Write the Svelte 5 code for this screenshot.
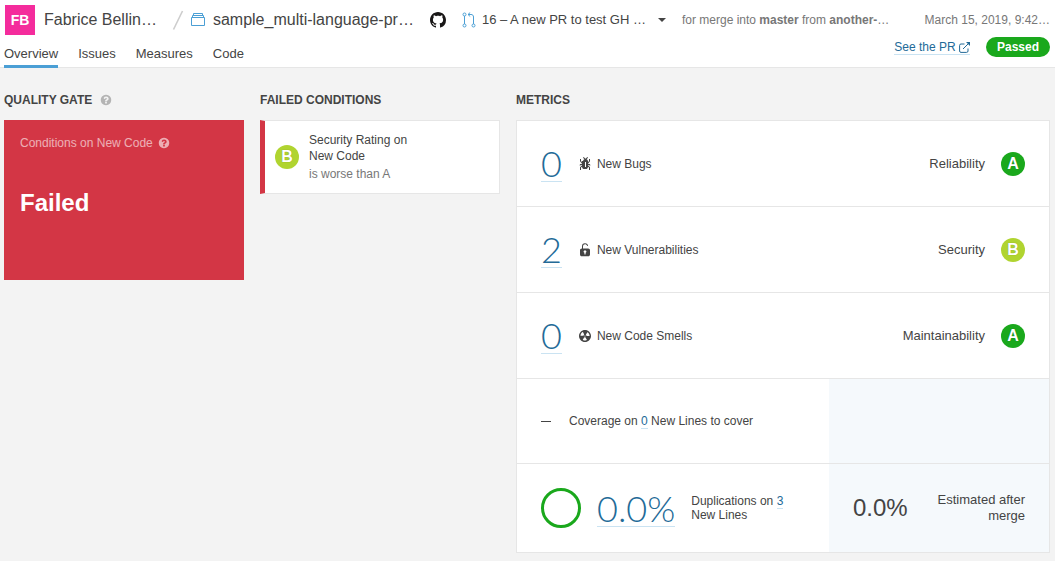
<script lang="ts">
  const tabs = ['Overview', 'Issues', 'Measures', 'Code'];

  const ratings = [
    { icon: 'bug', value: 0, label: 'New Bugs', domain: 'Reliability', rating: 'A' },
    { icon: 'lock', value: 2, label: 'New Vulnerabilities', domain: 'Security', rating: 'B' },
    { icon: 'smell', value: 0, label: 'New Code Smells', domain: 'Maintainability', rating: 'A' },
  ];

  const iconPaths: Record<string, string> = {
    bug: 'M8.01 10.99h1v-5h-1v5zm3-2h1.265l.46.771.775-.543-.733-1.228H11.01v-.316l2-2.343v-2.341h-1v1.972l-1 1.172V4.99h-.029c-.101-.826-.658-1.52-1.436-1.853l1.472-1.349-.676-.736-1.831 1.678-1.831-1.678-.676.736 1.472 1.349c-.778.333-1.335 1.027-1.436 1.853H5.01v1.144l-1-1.172V2.99h-1v2.341l2 2.343v.316H3.243l-.733 1.228.775.543.46-.771H5.01v.287l-2 1.912v2.801h1v-2.374l1.003-.959c.018 1.289 1.07 2.333 2.363 2.333h1.268c1.293 0 2.345-1.044 2.363-2.333l1.003.959v2.374h1v-2.801l-2-1.912v-.287z',
    lock: 'M11.2 6.500H6V4.200a2 2 0 0 1 2-2c1 0 1.700.6 2 1.400a.5.5 0 0 0 1-.3C10.600 2 9.500 1.200 8 1.200a3 3 0 0 0-3 3v2.300h-.2C3.800 6.500 3 7.300 3 8.300v4.200c0 1 .8 1.800 1.800 1.800h6.400c1 0 1.800-.8 1.800-1.800V8.300c0-1-.8-1.800-1.800-1.800zM8.600 10.800V12a.6.6 0 0 1-1.200 0v-1.200a1.300 1.300 0 1 1 1.200 0z',
    smell: 'M8 2C4.7 2 2 4.7 2 8s2.7 6 6 6 6-2.7 6-6-2.7-6-6-6zm-.5 5.500h.9v.9h-.9v-.9zm-3.800.2c-.1 0-.2-.1-.2-.2 0-.4.1-1.200.6-2S5.300 4.200 5.600 4c.2 0 .3 0 .3.1l1.300 2.300c0 .1 0 .2-.1.2-.1.2-.2.3-.3.5-.1.2-.2.4-.2.5 0 .1-.1.2-.2.2l-2.700-.1zM9.900 12c-.3.2-1.100.5-2 .5-.9 0-1.700-.3-2-.5-.1 0-.1-.2-.1-.3l1.300-2.300c0-.1.1-.1.2-.1.2.1.3.1.5.1s.4 0 .5-.1c.1 0 .2 0 .2.1l1.300 2.300c.2.2.2.3.1.3zm2.500-4.100L9.700 8c-.1 0-.2-.1-.2-.2 0-.2-.1-.4-.2-.5 0-.1-.2-.3-.3-.4-.1 0-.1-.1-.1-.2l1.300-2.300c.1-.1.2-.1.3-.1.3.2 1 .7 1.500 1.500s.6 1.600.6 2c0 0-.1.1-.2.1z',
  };
</script>

{#snippet help()}
  <svg class="help" width="12" height="12" viewBox="0 0 16 16" aria-hidden="true">
    <path
      fill="currentColor"
      fill-rule="evenodd"
      d="M9.167 12.375v-1.75q0-.127-.082-.21t-.21-.082h-1.75q-.127 0-.21.082t-.082.21v1.75q0 .128.082.21t.21.082h1.75q.128 0 .21-.082t.082-.21zM11.5 6.25q0-.802-.506-1.486T9.732 3.707t-1.55-.374q-2.215 0-3.382 1.942-.137.22.072.383l1.204.912q.065.054.175.054.147 0 .228-.11.482-.618.784-.838.31-.22.786-.22.437 0 .779.238t.342.538q0 .347-.182.556t-.62.407q-.574.255-1.053.788T6.833 9.127v.328q0 .128.082.21t.21.083h1.75q.127 0 .21-.082t.082-.21q0-.173.196-.451t.497-.451q.292-.164.447-.26t.42-.319.406-.437.256-.553T11.5 6.25zM15 8q0 1.905-.939 3.514t-2.548 2.547T8 15t-3.514-.939-2.547-2.548T1 8t.939-3.514 2.547-2.547T8 1t3.514.939 2.547 2.547T15 8z"
    />
  </svg>
{/snippet}

<header>
  <div class="crumbs">
    <span class="avatar">FB</span>
    <a class="name" href="#organization">Fabrice Bellin…</a>
    <svg class="slash" width="12" height="22" viewBox="0 0 12 22" aria-hidden="true">
      <path d="M1.500 20.500L10.500 2" stroke="#cdcdcd" stroke-width="1.6" />
    </svg>
    <svg class="project" width="14" height="14" viewBox="0 0 14 14" aria-hidden="true">
      <path
        d="M.5 4.500h13v8H.5zM1.500 4.500v-2h11v2M2.500 2.500v-2h9v2"
        fill="none"
        stroke="#4b9fd5"
      />
    </svg>
    <a class="name" href="#project">sample_multi-language-pr…</a>
    <a class="github" href="#github" aria-label="GitHub">
      <svg width="16" height="16" viewBox="0 0 16 16">
        <path
          fill="#191717"
          d="M8 0C3.58 0 0 3.58 0 8c0 3.54 2.29 6.53 5.47 7.59.4.07.55-.17.55-.38 0-.19-.01-.82-.01-1.49-2.01.37-2.53-.49-2.69-.94-.09-.23-.48-.94-.82-1.13-.28-.15-.68-.52-.01-.53.63-.01 1.08.58 1.23.82.72 1.21 1.87.87 2.33.66.07-.52.28-.87.51-1.07-1.78-.2-3.64-.89-3.64-3.95 0-.87.31-1.59.82-2.15-.08-.2-.36-1.02.08-2.12 0 0 .67-.21 2.2.82.64-.18 1.32-.27 2-.27s1.36.09 2 .27c1.53-1.04 2.2-.82 2.2-.82.44 1.1.16 1.92.08 2.12.51.56.82 1.27.82 2.15 0 3.07-1.87 3.75-3.65 3.95.29.25.54.73.54 1.48 0 1.07-.01 1.93-.01 2.2 0 .21.15.46.55.38A8.01 8.01 0 0 0 16 8c0-4.420-3.580-8-8-8z"
        />
      </svg>
    </a>
    <button class="branch">
      <svg width="14" height="16" viewBox="0 0 14 16" aria-hidden="true">
        <g fill="none" stroke="#4b9fd5">
          <circle cx="2.500" cy="2.500" r="1.500" />
          <circle cx="2.500" cy="13.500" r="1.500" />
          <circle cx="11.500" cy="13.500" r="1.500" />
          <path d="M2.500 4v8M11.500 12V5c0-1.600-.9-2.500-2.500-2.500H6M8.200.5L6 2.500l2.200 2" />
        </g>
      </svg>
      <span>16 – A new PR to test GH …</span>
      <svg class="caret" width="8" height="4" viewBox="0 0 8 4" aria-hidden="true">
        <path d="M0 0h8L4 4z" fill="#444" />
      </svg>
    </button>
    <span class="note">for merge into <b>master</b> from <b>another-</b>…</span>
    <time class="note" datetime="2019-03-15">March 15, 2019, 9:42…</time>
  </div>

  <div class="bar">
    <nav>
      {#each tabs as tab, i}
        <a class="tab" class:active={i === 0} href="#{tab.toLowerCase()}">{tab}</a>
      {/each}
    </nav>
    <div class="status">
      <a class="link see" href="#pull-request">
        See the PR
        <svg width="11" height="11" viewBox="0 0 11 11" aria-hidden="true">
          <path
            d="M5.500 2H2Q.6 2 .6 3.400V9Q.6 10.400 2 10.400h5.500Q9 10.400 9 9V6.500M4 7l5.500-5.500"
            fill="none"
            stroke="currentColor"
          />
          <path d="M7 0H11v4z" fill="currentColor" />
        </svg>
      </a>
      <span class="passed">Passed</span>
    </div>
  </div>
</header>

<main>
  <section class="side">
    <h2>QUALITY GATE {@render help()}</h2>
    <div class="gate">
      <p>Conditions on New Code {@render help()}</p>
      <strong>Failed</strong>
    </div>
  </section>

  <section class="side">
    <h2>FAILED CONDITIONS</h2>
    <a class="condition" href="#condition">
      <span class="rating b">B</span>
      <span class="text">
        <span>Security Rating on<br />New Code</span>
        <span class="threshold">is worse than A</span>
      </span>
    </a>
  </section>

  <section class="metrics">
    <h2>METRICS</h2>
    <div class="panel">
      {#each ratings as row}
        <div class="row">
          <a class="link big" href="#{row.icon}">{row.value}</a>
          <svg class="kind" width="16" height="16" viewBox="0 0 16 16" aria-hidden="true">
            <path d={iconPaths[row.icon]} fill="#444" fill-rule="evenodd" />
          </svg>
          <span>{row.label}</span>
          <span class="domain">{row.domain}</span>
          <span class="rating {row.rating.toLowerCase()}">{row.rating}</span>
        </div>
      {/each}

      <div class="row split">
        <div class="measure">
          <span class="none"></span>
          <span>Coverage on <a class="link" href="#coverage">0</a> New Lines to cover</span>
        </div>
        <div class="estimate"></div>
      </div>

      <div class="row split last">
        <div class="measure">
          <span class="ring"></span>
          <a class="link big" href="#duplications">0.0%</a>
          <span class="dup">Duplications on <a class="link" href="#lines">3</a><br />New Lines</span>
        </div>
        <div class="estimate">
          <span class="after">0.0%</span>
          <span class="caption">Estimated after merge</span>
        </div>
      </div>
    </div>
  </section>
</main>

<style>
  :global(body) {
    background: #f3f3f3;
    color: #444;
    font: 12px/16px 'Liberation Sans', Arial, sans-serif;
  }
  a {
    color: inherit;
    text-decoration: none;
  }
  svg {
    flex: none;
  }
  header {
    background: #fff;
    border-bottom: 1px solid #e6e6e6;
    white-space: nowrap;
  }

  /* Breadcrumbs */
  .crumbs {
    display: flex;
    align-items: center;
    padding: 5px 5px 0;
  }
  .avatar {
    width: 30px;
    height: 30px;
    margin-right: 9px;
    background: #f42c9c;
    color: #fff;
    font-size: 14px;
    line-height: 30px;
    font-weight: bold;
    text-align: center;
  }
  .name {
    font-size: 16px;
    line-height: 24px;
  }
  .slash {
    margin: 0 7px 0 15px;
  }
  .project {
    margin-right: 8px;
  }
  .github {
    display: flex;
    margin: 0 16px;
  }
  .branch {
    display: flex;
    align-items: center;
    padding: 0;
    border: none;
    background: none;
    color: inherit;
    font: 13px/16px 'Liberation Sans', Arial, sans-serif;
    cursor: pointer;
  }
  .branch span {
    margin: 0 12px 0 6px;
  }
  .note {
    margin-left: 16px;
    color: #777;
  }
  time.note {
    margin-left: auto;
  }

  /* Tabs and status */
  .bar {
    display: flex;
    justify-content: space-between;
    align-items: flex-end;
    height: 32px;
    padding: 0 5px 0 4px;
  }
  nav {
    display: flex;
    gap: 20px;
    margin-bottom: -1px;
  }
  .tab {
    padding-bottom: 3px;
    border-bottom: 3px solid transparent;
    font-size: 13px;
  }
  .active {
    border-color: #4b9fd5;
  }
  .status {
    display: flex;
    align-items: center;
    gap: 16px;
    margin-bottom: 10px;
  }
  .link {
    border-bottom: 1px solid #cae3f2;
    color: #236a97;
  }
  .see svg {
    vertical-align: -2px;
  }
  .see {
    line-height: 14px;
  }
  .passed {
    padding: 0 11px;
    border-radius: 10px;
    background: #1aa81c;
    color: #fff;
    font-weight: bold;
    line-height: 20px;
  }

  /* Columns */
  main {
    display: flex;
    align-items: flex-start;
    gap: 16px;
    padding: 24px 5px 8px 4px;
  }
  .side {
    flex: 0 0 240px;
  }
  .metrics {
    flex: 1;
  }
  h2 {
    margin: 0 0 12px;
    font-size: 12px;
    line-height: 16px;
  }
  .help {
    vertical-align: -2px;
  }
  h2 .help {
    margin-left: 4px;
    color: #b4b4b4;
  }
  .gate {
    box-sizing: border-box;
    min-height: 160px;
    padding: 15px 16px;
    background: #d33645;
    color: #fff;
  }
  .gate p {
    margin: 0 0 36px;
    opacity: 0.6;
  }
  .gate .help {
    margin-left: 2px;
  }
  .gate strong {
    font-size: 24px;
    line-height: 32px;
  }
  .condition {
    display: flex;
    align-items: center;
    padding: 11px 10px;
    border: 1px solid #e6e6e6;
    border-left: 5px solid #d33645;
    background: #fff;
  }
  .text {
    display: flex;
    flex-direction: column;
    gap: 2px;
    margin-left: 10px;
  }
  .threshold {
    color: #777;
  }
  .rating {
    width: 24px;
    height: 24px;
    border-radius: 50%;
    color: #fff;
    font-size: 16px;
    font-weight: bold;
    line-height: 24px;
    text-align: center;
    text-shadow: 0 0 1px rgba(0, 0, 0, 0.35);
  }
  .a {
    background: #1aa81c;
  }
  .b {
    background: #b0d430;
  }

  /* Metrics */
  .panel {
    border: 1px solid #e6e6e6;
    background: #fff;
  }
  .row {
    display: flex;
    align-items: center;
    min-height: 85px;
    padding: 0 24px;
    border-bottom: 1px solid #e6e6e6;
  }
  .big {
    font: 300 36px/36px Lato, 'Liberation Sans', sans-serif;
  }
  .kind {
    margin: 0 4px 0 15px;
  }
  .domain {
    margin: 0 16px 0 auto;
    font-size: 13px;
  }
  .split {
    align-items: stretch;
    min-height: 84px;
    padding: 0;
  }
  .last {
    min-height: 88px;
    border-bottom: none;
  }
  .measure,
  .estimate {
    display: flex;
    align-items: center;
    padding: 0 24px;
  }
  .measure {
    flex: 1;
  }
  .estimate {
    flex: 0 0 172px;
    justify-content: space-between;
    background: #f5f9fc;
  }
  .none {
    width: 10px;
    height: 1px;
    margin-right: 18px;
    background: #444;
  }
  .ring {
    box-sizing: border-box;
    width: 40px;
    height: 40px;
    margin-right: 16px;
    border: 3px solid #1aa81c;
    border-radius: 50%;
  }
  .dup {
    margin-left: 16px;
    line-height: 14px;
  }
  .after {
    font-size: 24px;
    line-height: 32px;
  }
  .caption {
    width: 96px;
    font-size: 13px;
    text-align: right;
  }
</style>
